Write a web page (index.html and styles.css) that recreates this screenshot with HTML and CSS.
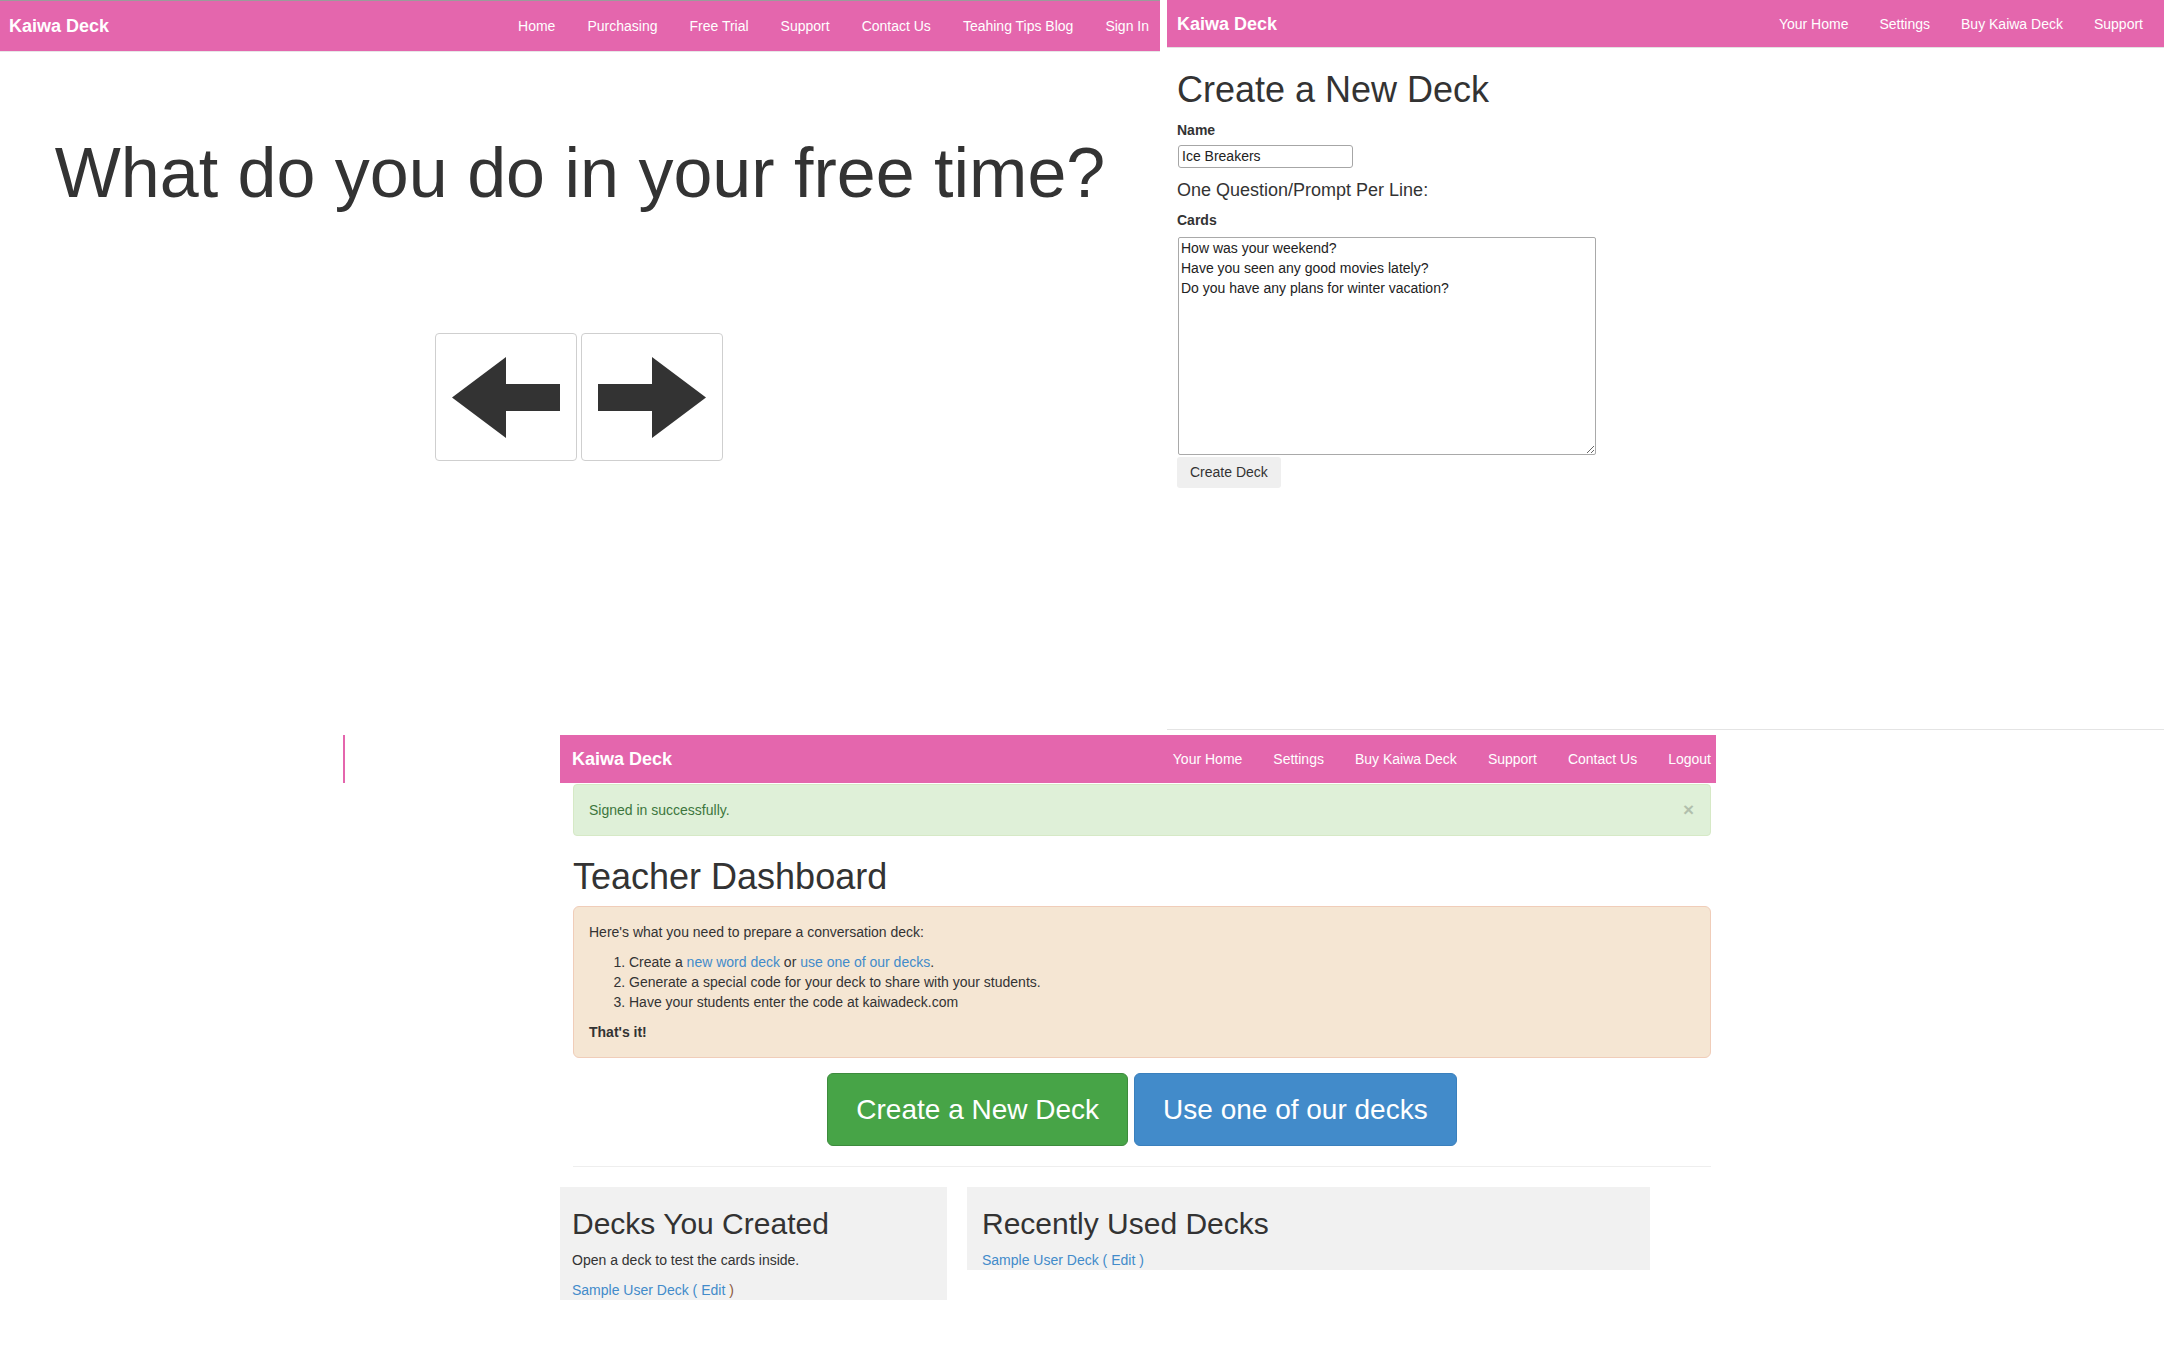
FILE: index.html
```html
<!DOCTYPE html>
<html lang="en">
<head>
<meta charset="utf-8">
<title>Kaiwa Deck</title>
<link rel="stylesheet" href="styles.css">
</head>
<body>
  <section class="win win-play">
    <nav class="navbar nb-play">
      <a class="brand" href="#">Kaiwa Deck</a>
      <ul class="nav nav-play">
        <li><a href="#">Home</a></li>
        <li><a href="#">Purchasing</a></li>
        <li><a href="#">Free Trial</a></li>
        <li><a href="#">Support</a></li>
        <li><a href="#">Contact Us</a></li>
        <li><a href="#">Teahing Tips Blog</a></li>
        <li><a href="#">Sign In</a></li>
      </ul>
    </nav>
    <h1 class="question">What do you do in your free time?</h1>
    <div class="arrows">
      <button class="arrow-btn" type="button" aria-label="Previous">
        <svg width="108" height="81" viewBox="0 0 108 81"><path d="M0 40.5 L54 0 L54 27 L108 27 L108 54 L54 54 L54 81 Z" fill="#333"/></svg>
      </button>
      <button class="arrow-btn" type="button" aria-label="Next">
        <svg width="108" height="81" viewBox="0 0 108 81"><path d="M108 40.5 L54 0 L54 27 L0 27 L0 54 L54 54 L54 81 Z" fill="#333"/></svg>
      </button>
    </div>
  </section>

  <section class="win win-new">
    <nav class="navbar nb-new">
      <a class="brand" href="#">Kaiwa Deck</a>
      <ul class="nav">
        <li><a href="#">Your Home</a></li>
        <li><a href="#">Settings</a></li>
        <li><a href="#">Buy Kaiwa Deck</a></li>
        <li><a href="#">Support</a></li>
      </ul>
    </nav>
    <div class="new-body">
      <h1 class="h1">Create a New Deck</h1>
      <label class="lbl" for="deck-name">Name</label>
      <input class="name-input" id="deck-name" type="text" value="Ice Breakers">
      <p class="prompt">One Question/Prompt Per Line:</p>
      <label class="lbl" for="deck-cards">Cards</label>
      <textarea class="cards" id="deck-cards">How was your weekend?
Have you seen any good movies lately?
Do you have any plans for winter vacation?</textarea>
      <button class="btn-plain" type="button">Create Deck</button>
    </div>
  </section>

  <div class="accent"></div>

  <section class="win win-dash">
    <nav class="navbar nb-dash">
      <a class="brand" href="#">Kaiwa Deck</a>
      <ul class="nav">
        <li><a href="#">Your Home</a></li>
        <li><a href="#">Settings</a></li>
        <li><a href="#">Buy Kaiwa Deck</a></li>
        <li><a href="#">Support</a></li>
        <li><a href="#">Contact Us</a></li>
        <li><a href="#">Logout</a></li>
      </ul>
    </nav>
    <div class="dash-body">
      <div class="alert-ok">
        <span>Signed in successfully.</span>
        <span class="close">×</span>
      </div>
      <h1 class="h1 dash-title">Teacher Dashboard</h1>
      <div class="info">
        <p>Here's what you need to prepare a conversation deck:</p>
        <ol>
          <li>Create a <a href="#">new word deck</a> or <a href="#">use one of our decks</a>.</li>
          <li>Generate a special code for your deck to share with your students.</li>
          <li>Have your students enter the code at kaiwadeck.com</li>
        </ol>
        <p class="last"><strong>That's it!</strong></p>
      </div>
      <div class="cta">
        <a class="btn-big btn-green" href="#">Create a New Deck</a>
        <a class="btn-big btn-blue" href="#">Use one of our decks</a>
      </div>
      <hr class="rule">
      <div class="decks">
        <div class="deck-box deck-mine">
          <h2 class="h2">Decks You Created</h2>
          <p class="deck-p">Open a deck to test the cards inside.</p>
          <div class="deck-line"><a href="#">Sample User Deck</a> <span class="paren-l">(</span> <a href="#">Edit</a> <span class="paren-r">)</span></div>
        </div>
        <div class="deck-box deck-recent">
          <h2 class="h2">Recently Used Decks</h2>
          <div class="deck-line"><a href="#">Sample User Deck</a> <span class="paren-b">(</span> <a href="#">Edit</a> <span class="paren-b">)</span></div>
        </div>
      </div>
    </div>
  </section>
</body>
</html>
```

FILE: styles.css
```css
html, body {
  margin: 0;
  padding: 0;
}
body {
  width: 2164px;
  height: 1363px;
  position: relative;
  overflow: hidden;
  background: #fff;
  color: #333;
  font-family: "Liberation Sans", Arial, sans-serif;
  font-size: 14px;
  line-height: 20px;
}
a {
  color: #428bca;
  text-decoration: none;
}

/* canvas windows */
.win {
  position: absolute;
  background: #fff;
  box-sizing: border-box;
}
.win-play {
  left: 0;
  top: 0;
  width: 1160px;
  height: 700px;
  border-top: 1px solid #9b9b9b;
}
.win-new {
  left: 1167px;
  top: 0;
  width: 997px;
  height: 730px;
  border-bottom: 1px solid #e4e4e4;
}
.win-dash {
  left: 560px;
  top: 735px;
  width: 1156px;
}
.accent {
  position: absolute;
  left: 343px;
  top: 735px;
  width: 2px;
  height: 48px;
  background: #e466ad;
}

/* navbars */
.navbar {
  display: flex;
  align-items: center;
  background: #e466ad;
  box-sizing: border-box;
}
.brand {
  color: #fff;
  font-weight: bold;
  font-size: 18px;
  line-height: 20px;
}
.nav {
  display: flex;
  gap: 31px;
  margin: 0 0 0 auto;
  padding: 0;
  list-style: none;
  font-size: 14px;
}
.nav a {
  color: #fff;
}
.nb-play {
  height: 51px;
  padding: 0 11px 0 9px;
  border-bottom: 1px solid #e7e7e7;
}
.nav-play {
  gap: 32px;
}
.nb-new {
  height: 48px;
  padding: 0 21px 0 10px;
  border-bottom: 1px solid #e2e2e2;
}
.nb-dash {
  height: 48px;
  padding: 0 5px 0 12px;
}

/* play window */
.question {
  margin: 81px 0 0;
  font-size: 70px;
  line-height: 80px;
  font-weight: normal;
  text-align: center;
  color: #333;
}
.arrows {
  display: flex;
  justify-content: center;
  gap: 4px;
  margin-top: 120px;
  padding-right: 3px;
}
.arrow-btn {
  width: 142px;
  height: 128px;
  box-sizing: border-box;
  border: 1px solid #cfcfcf;
  border-radius: 4px;
  background: #fff;
  padding: 0;
  display: flex;
  align-items: center;
  justify-content: center;
}

/* new deck window */
.new-body {
  padding: 0 10px;
  display: flex;
  flex-direction: column;
  align-items: flex-start;
}
.h1 {
  font-size: 36px;
  line-height: 39.6px;
  font-weight: normal;
  margin: 22px 0 10px;
  color: #333;
}
.lbl {
  font-weight: bold;
  font-size: 14px;
  line-height: 20px;
  margin-bottom: 5px;
}
.name-input {
  box-sizing: border-box;
  width: 175px;
  height: 23px;
  margin: 0 0 0 1px;
  padding: 0 3px;
  border: 1px solid #a6a6a6;
  border-radius: 3px;
  font-family: "Liberation Sans", Arial, sans-serif;
  font-size: 14px;
  color: #222;
}
.prompt {
  margin: 9px 0 7px;
  font-size: 18px;
  line-height: 26px;
}
.cards {
  box-sizing: border-box;
  width: 418px;
  height: 218px;
  margin: 2px 0 0 1px;
  padding: 0 2px 1px;
  border: 1px solid #a9a9a9;
  border-radius: 2px;
  font-family: "Liberation Sans", Arial, sans-serif;
  font-size: 14px;
  line-height: 20px;
  color: #222;
  resize: both;
}
.btn-plain {
  margin-top: 2px;
  height: 31px;
  padding: 0 13px;
  border: none;
  border-radius: 3px;
  background: #efefef;
  font-family: "Liberation Sans", Arial, sans-serif;
  font-size: 14px;
  color: #333;
}

/* dashboard window */
.dash-body {
  padding: 0 5px 0 13px;
}
.alert-ok {
  display: flex;
  align-items: center;
  justify-content: space-between;
  margin-top: 1px;
  padding: 15px 16px 15px 15px;
  border: 1px solid #d6e9c6;
  border-radius: 4px;
  background: #dff0d8;
  color: #3c763d;
}
.close {
  font-size: 19px;
  font-weight: bold;
  color: #000;
  opacity: .2;
}
.dash-title {
  margin: 21px 0 9px;
}
.info {
  padding: 15px;
  border: 1px solid #f0cdb9;
  border-radius: 6px;
  background: #f5e6d3;
  color: #333;
}
.info p {
  margin: 0 0 10px;
}
.info p.last {
  margin: 0;
}
.info ol {
  margin: 0 0 10px;
  padding-left: 40px;
}
.cta {
  display: flex;
  justify-content: center;
  gap: 6px;
  margin-top: 15px;
}
.btn-big {
  display: block;
  padding: 17px 28px;
  border: 1px solid;
  border-radius: 6px;
  font-size: 28px;
  line-height: 37px;
  color: #fff;
}
.btn-green {
  background: #47a447;
  border-color: #3d8b3d;
}
.btn-blue {
  background: #428bca;
  border-color: #3a80bd;
}
.rule {
  margin: 20px 0;
  border: 0;
  border-top: 1px solid #eee;
}
.decks {
  display: flex;
  align-items: flex-start;
  gap: 20px;
  margin-left: -13px;
}
.deck-box {
  display: flow-root;
  box-sizing: border-box;
  background: #f1f1f1;
}
.deck-mine {
  width: 387px;
  padding: 0 12px;
}
.deck-recent {
  width: 683px;
  padding: 0 15px;
}
.h2 {
  margin: 20px 0 10px;
  font-size: 30px;
  line-height: 33px;
  font-weight: normal;
  color: #333;
}
.deck-p {
  margin: 0 0 10px;
}
.paren-l {
  color: #428bca;
}
.paren-r {
  color: #8b5a3c;
}
.paren-b {
  color: #428bca;
}
```
